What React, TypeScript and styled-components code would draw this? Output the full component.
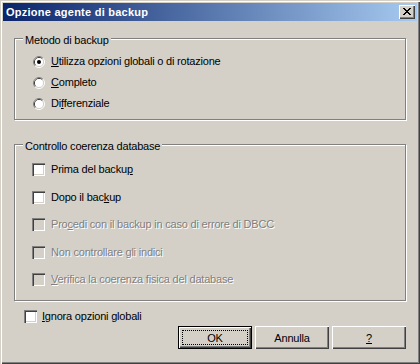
import styled, { createGlobalStyle } from "styled-components";

const GlobalStyle = createGlobalStyle`
  html, body {
    margin: 0;
    padding: 0;
    background: #d4d0c8;
  }
  body {
    font-family: "Liberation Sans", Arial, sans-serif;
    font-size: 11px;
  }
`;

const Window = styled.div`
  width: 420px;
  height: 364px;
  box-sizing: border-box;
  padding: 3px;
  display: flex;
  flex-direction: column;
  background: #d4d0c8;
  color: #000;
  letter-spacing: -0.2px;
  box-shadow: inset 1px 1px #d4d0c8, inset 2px 2px #fff, inset -1px -1px #404040,
    inset -2px -2px #808080;
`;

const TitleBar = styled.div`
  height: 18px;
  flex: none;
  display: flex;
  align-items: center;
  padding: 0 2px 0 3px;
  background: linear-gradient(to right, #0a246a, #a6caf0);
`;

const Title = styled.span`
  flex: 1;
  color: #fff;
  font-weight: bold;
  letter-spacing: 0.25px;
  line-height: 18px;
`;

const CloseButton = styled.div`
  width: 16px;
  height: 14px;
  box-sizing: border-box;
  display: flex;
  align-items: center;
  justify-content: center;
  padding: 0 1px 1px 0;
  background: #d4d0c8;
  box-shadow: inset 1px 1px #fff, inset -1px -1px #404040, inset -2px -2px #808080;
`;

const Body = styled.div`
  flex: 1;
  display: flex;
  flex-direction: column;
  padding: 17px 11px 0;
`;

const GroupBox = styled.div<{ $top: number; $padTop: number; $padBottom: number }>`
  position: relative;
  margin-top: ${(p) => p.$top}px;
  padding: ${(p) => p.$padTop}px 0 ${(p) => p.$padBottom}px 17px;
  border: 1px solid #808080;
  box-shadow: inset 1px 1px #fff, 1px 1px #fff;
  display: flex;
  flex-direction: column;
`;

const Legend = styled.span`
  position: absolute;
  top: -5px;
  left: 8px;
  padding: 0 2px;
  line-height: 13px;
  background: #d4d0c8;
`;

const OptionRow = styled.label<{ $height: number }>`
  height: ${(p) => p.$height}px;
  display: flex;
  align-items: center;
  gap: 6px;
  line-height: 13px;
`;

const OptionText = styled.span<{ $disabled?: boolean }>`
  color: ${(p) => (p.$disabled ? "#808080" : "#000")};
  text-shadow: ${(p) => (p.$disabled ? "1px 1px 0 #fff" : "none")};
  white-space: nowrap;
`;

const CheckBox = styled.span<{ $disabled?: boolean }>`
  width: 13px;
  height: 13px;
  flex: none;
  background: ${(p) => (p.$disabled ? "#d4d0c8" : "#fff")};
  box-shadow: inset 1px 1px #808080, inset 2px 2px #404040, inset -1px -1px #fff,
    inset -2px -2px #d4d0c8;
`;

const RadioSvg = styled.svg`
  flex: none;
  margin-left: 1px;
`;

const Footer = styled.div`
  display: flex;
  flex-direction: column;
`;

const IgnoreRow = styled(OptionRow)`
  margin-top: 9px;
  padding-left: 10px;
  gap: 5px;
`;

const ButtonRow = styled.div`
  display: flex;
  justify-content: flex-end;
  gap: 3px;
  margin-top: 3px;
`;

const Button = styled.div<{ $default?: boolean }>`
  width: 74px;
  height: 23px;
  box-sizing: border-box;
  display: flex;
  align-items: center;
  justify-content: center;
  background: #d4d0c8;
  box-shadow: ${(p) =>
    p.$default
      ? "inset 0 0 0 1px #000, inset 2px 2px #fff, inset -2px -2px #404040, inset -3px -3px #808080"
      : "inset 1px 1px #fff, inset -1px -1px #404040, inset -2px -2px #808080"};
  outline: ${(p) => (p.$default ? "1px dotted #000" : "none")};
  outline-offset: -5px;
`;

function Radio({ checked }: { checked?: boolean }) {
  return (
    <RadioSvg width="12" height="12" viewBox="0 0 12 12">
      <path d="M2.11 9.89 A5.5 5.5 0 0 1 9.89 2.11" fill="none" stroke="#808080" />
      <path d="M9.89 2.11 A5.5 5.5 0 0 1 2.11 9.89" fill="none" stroke="#fff" />
      <path d="M2.82 9.18 A4.5 4.5 0 0 1 9.18 2.82" fill="none" stroke="#404040" />
      <path d="M9.18 2.82 A4.5 4.5 0 0 1 2.82 9.18" fill="none" stroke="#d4d0c8" />
      <circle cx="6" cy="6" r="4" fill="#fff" />
      {checked && <circle cx="6" cy="6" r="2" fill="#000" />}
    </RadioSvg>
  );
}

function CloseGlyph() {
  return (
    <svg width="8" height="7" viewBox="0 0 8 7" shapeRendering="crispEdges">
      <path
        d="M0 0h2v1H0z M6 0h2v1H6z M1 1h2v1H1z M5 1h2v1H5z M2 2h4v1H2z M3 3h2v1H3z M2 4h4v1H2z M1 5h2v1H1z M5 5h2v1H5z M0 6h2v1H0z M6 6h2v1H6z"
        fill="#000"
      />
    </svg>
  );
}

export default function App() {
  return (
    <>
      <GlobalStyle />
      <Window>
        <TitleBar>
          <Title>Opzione agente di backup</Title>
          <CloseButton>
            <CloseGlyph />
          </CloseButton>
        </TitleBar>
        <Body>
          <GroupBox $top={0} $padTop={12} $padBottom={5}>
            <Legend>Metodo di backup</Legend>
            <OptionRow $height={21}>
              <Radio checked />
              <OptionText>
                <u>U</u>tilizza opzioni globali o di rotazione
              </OptionText>
            </OptionRow>
            <OptionRow $height={21}>
              <Radio />
              <OptionText>
                <u>C</u>ompleto
              </OptionText>
            </OptionRow>
            <OptionRow $height={21}>
              <Radio />
              <OptionText>
                Di<u>f</u>ferenziale
              </OptionText>
            </OptionRow>
          </GroupBox>

          <GroupBox $top={24} $padTop={11} $padBottom={6.5}>
            <Legend>Controllo coerenza database</Legend>
            <OptionRow $height={27.5}>
              <CheckBox />
              <OptionText>
                Prima del backu<u>p</u>
              </OptionText>
            </OptionRow>
            <OptionRow $height={27.5}>
              <CheckBox />
              <OptionText>
                Dopo il bac<u>k</u>up
              </OptionText>
            </OptionRow>
            <OptionRow $height={27.5}>
              <CheckBox $disabled />
              <OptionText $disabled>
                Pro<u>c</u>edi con il backup in caso di errore di DBCC
              </OptionText>
            </OptionRow>
            <OptionRow $height={27.5}>
              <CheckBox $disabled />
              <OptionText $disabled>
                Non controllare <u>g</u>li indici
              </OptionText>
            </OptionRow>
            <OptionRow $height={27.5}>
              <CheckBox $disabled />
              <OptionText $disabled>
                <u>V</u>erifica la coerenza fisica del database
              </OptionText>
            </OptionRow>
          </GroupBox>

          <Footer>
            <IgnoreRow $height={13}>
              <CheckBox />
              <OptionText>
                <u>I</u>gnora opzioni globali
              </OptionText>
            </IgnoreRow>
            <ButtonRow>
              <Button $default>OK</Button>
              <Button>Annulla</Button>
              <Button>
                <u>?</u>
              </Button>
            </ButtonRow>
          </Footer>
        </Body>
      </Window>
    </>
  );
}
